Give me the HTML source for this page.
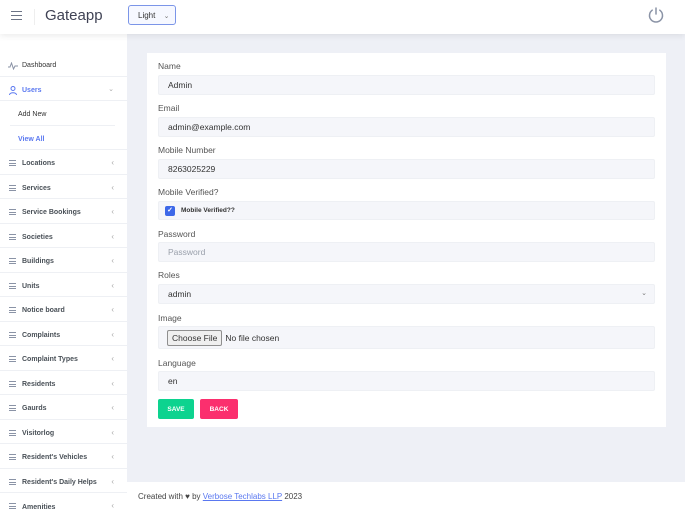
<!DOCTYPE html>
<html><head><style>
*{box-sizing:border-box;margin:0;padding:0}
html,body{width:685px;height:515px;overflow:hidden}
body{font-family:"Liberation Sans",sans-serif;background:#eef0f6;position:relative;color:#3f4254}
.hdr{position:absolute;left:0;top:0;width:685px;height:34px;background:#fff;box-shadow:0 2px 6px rgba(0,0,0,.08);z-index:2}
.side{position:absolute;left:0;top:34px;width:127px;height:481px;background:#fff}
.it{position:absolute;left:0;width:127px;height:24.5px;border-bottom:1px solid #eef0f4;font-size:7px;font-weight:bold;color:#495057;display:flex;align-items:center;padding-left:22px;padding-top:4px}
.ic{position:absolute;left:9px;top:10px;width:7px;height:6px;border-top:1px solid #8a93a6;border-bottom:1px solid #8a93a6}
.ic:after{content:"";position:absolute;left:0;right:0;top:2px;border-top:1px solid #8a93a6}
.ch{position:absolute;right:13px;top:8px;font-size:8px;color:#aaa;font-weight:normal}
.card{position:absolute;left:147px;top:53px;width:519px;height:374px;background:#fff}
.lb{position:absolute;left:11px;font-size:8.5px;color:#555}
.in{position:absolute;left:11px;width:497px;height:20px;background:#f5f6fa;border:1px solid #eef0f4;border-radius:2px;font-size:8.5px;color:#333;padding-left:9px;display:flex;align-items:center}
.btn{position:absolute;top:346px;height:20px;border-radius:2px;color:#fff;font-size:6.5px;font-weight:bold;display:flex;align-items:center;justify-content:center}
.ft{position:absolute;left:127px;top:482px;width:558px;height:33px;background:#fff;font-size:8px;color:#444;padding:10px 0 0 11px}
</style></head><body>
<div class="hdr">
 <div style="position:absolute;left:11px;top:11px;width:11px;height:9px;border-top:1.3px solid #6b7385;border-bottom:1.3px solid #6b7385"><div style="margin-top:2.8px;border-top:1.3px solid #6b7385"></div></div>
 <div style="position:absolute;left:34px;top:9px;height:16px;border-left:1px solid #eee"></div>
 <div style="position:absolute;left:45px;top:7px;font-size:15px;color:#3f4254">Gateapp</div>
 <div style="position:absolute;left:128px;top:5px;width:48px;height:20px;border:1px solid #7b95e8;border-radius:3px;background:#f6f8ff;font-size:8px;color:#333;padding:5px 0 0 9px">Light <span style="font-size:7px;color:#777;margin-left:6px">&#8964;</span></div>
 <svg style="position:absolute;left:647px;top:6px" width="18" height="18" viewBox="0 0 18 18" fill="none" stroke="#8a93a6" stroke-width="1.5" stroke-linecap="round"><path d="M5.2 4.2A6.5 6.5 0 1 0 12.8 4.2"/><path d="M9 2v6"/></svg>
</div>
<div class="side">
 <div class="it" style="top:18px;font-weight:normal;color:#333"><svg style="position:absolute;left:8px;top:10px" width="10" height="8" viewBox="0 0 10 8" fill="none" stroke="#8a93a6"><path d="M0 5h2l1.5-4 2 6 1.5-3h3"/></svg>Dashboard</div>
 <div class="it" style="top:42.5px;color:#5a78f0"><svg style="position:absolute;left:9px;top:9px" width="8" height="9" viewBox="0 0 8 9" fill="none" stroke="#5a78f0"><circle cx="4" cy="2.5" r="2"/><path d="M0.5 9c0-3 7-3 7 0"/></svg>Users<span class="ch" style="font-size:7px">&#8964;</span></div>
 <div class="it" style="top:67px;left:10px;width:105px;padding-left:8px;color:#333;font-weight:normal">Add New</div>
 <div class="it" style="top:91.5px;left:10px;width:117px;padding-left:8px;color:#5a78f0">View All</div>
 <div class="it" style="top:116px"><i class="ic"></i>Locations<span class="ch">&#8249;</span></div>
 <div class="it" style="top:140.5px"><i class="ic"></i>Services<span class="ch">&#8249;</span></div>
 <div class="it" style="top:165px"><i class="ic"></i>Service Bookings<span class="ch">&#8249;</span></div>
 <div class="it" style="top:189.5px"><i class="ic"></i>Societies<span class="ch">&#8249;</span></div>
 <div class="it" style="top:214px"><i class="ic"></i>Buildings<span class="ch">&#8249;</span></div>
 <div class="it" style="top:238.5px"><i class="ic"></i>Units<span class="ch">&#8249;</span></div>
 <div class="it" style="top:263px"><i class="ic"></i>Notice board<span class="ch">&#8249;</span></div>
 <div class="it" style="top:287.5px"><i class="ic"></i>Complaints<span class="ch">&#8249;</span></div>
 <div class="it" style="top:312px"><i class="ic"></i>Complaint Types<span class="ch">&#8249;</span></div>
 <div class="it" style="top:336.5px"><i class="ic"></i>Residents<span class="ch">&#8249;</span></div>
 <div class="it" style="top:361px"><i class="ic"></i>Gaurds<span class="ch">&#8249;</span></div>
 <div class="it" style="top:385.5px"><i class="ic"></i>Visitorlog<span class="ch">&#8249;</span></div>
 <div class="it" style="top:410px"><i class="ic"></i>Resident's Vehicles<span class="ch">&#8249;</span></div>
 <div class="it" style="top:434.5px"><i class="ic"></i>Resident's Daily Helps<span class="ch">&#8249;</span></div>
 <div class="it" style="top:459px;border-bottom:none"><i class="ic"></i>Amenities<span class="ch">&#8249;</span></div>
</div>
<div class="card">
 <div class="lb" style="top:8px">Name</div>
 <div class="in" style="top:22px">Admin</div>
 <div class="lb" style="top:50px">Email</div>
 <div class="in" style="top:64px">admin@example.com</div>
 <div class="lb" style="top:92px">Mobile Number</div>
 <div class="in" style="top:106px">8263025229</div>
 <div class="lb" style="top:134px">Mobile Verified?</div>
 <div class="in" style="top:148px;height:19px;font-size:6.5px;font-weight:bold;padding-left:22px"><span style="position:absolute;left:6px;top:4px;width:10px;height:10px;background:#3d68e8;border-radius:2px;color:#fff;font-size:7px;line-height:10px;text-align:center">&#10003;</span>Mobile Verified??</div>
 <div class="lb" style="top:176px">Password</div>
 <div class="in" style="top:189px;color:#9aa0ab">Password</div>
 <div class="lb" style="top:217px">Roles</div>
 <div class="in" style="top:231px">admin<span style="position:absolute;right:7px;top:4px;font-size:7px;color:#777">&#8964;</span></div>
 <div class="lb" style="top:260px">Image</div>
 <div class="in" style="top:273px;height:23px;padding-left:8px"><span style="border:1px solid #8f8f8f;background:#efefef;border-radius:2px;padding:2px 4px;margin-right:3px">Choose File</span>No file chosen</div>
 <div class="lb" style="top:305px">Language</div>
 <div class="in" style="top:318px">en</div>
 <div class="btn" style="left:11px;width:36px;background:#0dd38f">SAVE</div>
 <div class="btn" style="left:53px;width:38px;background:#fb2f6e">BACK</div>
</div>
<div class="ft">Created with &#9829; by <a style="color:#5a78f0;text-decoration:underline">Verbose Techlabs LLP</a> 2023</div>
</body></html>
